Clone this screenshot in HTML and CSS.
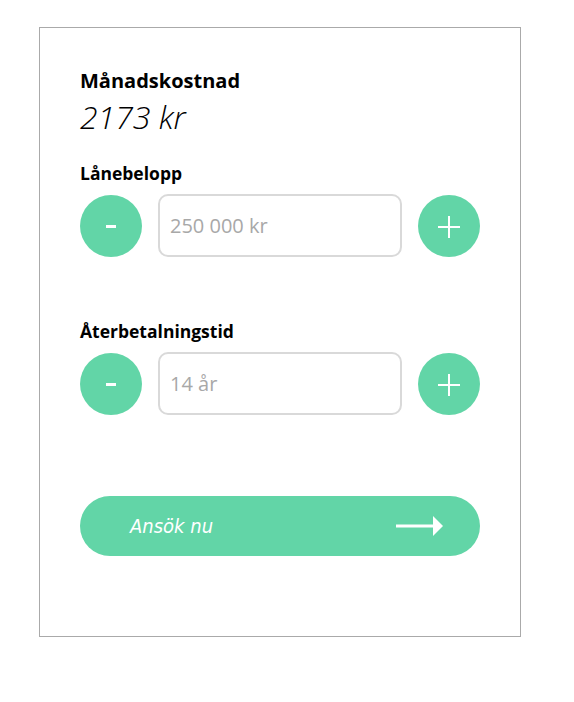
FILE: index.html
```html
<!DOCTYPE html>
<html lang="sv">
<head>
<meta charset="utf-8">
<title>Lånekalkylator</title>
<link rel="stylesheet" href="styles.css">
</head>
<body>
<div class="card">
  <div class="heading">Månadskostnad</div>
  <div class="value">2173 kr</div>

  <div class="label first">Lånebelopp</div>
  <div class="row">
    <button class="circle" aria-label="Minska"><span class="minus"></span></button>
    <div class="field">250 000 kr</div>
    <button class="circle" aria-label="Öka">
      <svg class="plus" width="22" height="22" viewBox="0 0 22 22"><path d="M11 0V22M0 11H22" stroke="#fff" stroke-width="2"/></svg>
    </button>
  </div>

  <div class="label second">Återbetalningstid</div>
  <div class="row">
    <button class="circle" aria-label="Minska"><span class="minus"></span></button>
    <div class="field">14 år</div>
    <button class="circle" aria-label="Öka">
      <svg class="plus" width="22" height="22" viewBox="0 0 22 22"><path d="M11 0V22M0 11H22" stroke="#fff" stroke-width="2"/></svg>
    </button>
  </div>

  <button class="apply">
    <span class="apply-text">Ansök nu</span>
    <svg class="arrow" width="47" height="20" viewBox="0 0 47 20"><path d="M0 10H38" stroke="#fff" stroke-width="3"/><path d="M37 0L47 10L37 20Z" fill="#fff"/></svg>
  </button>
</div>
</body>
</html>
```

FILE: styles.css
```css
html, body {
  margin: 0;
  padding: 0;
  background: #fff;
}

.card {
  box-sizing: border-box;
  width: 482px;
  margin: 27px 0 0 39px;
  padding: 41px 40px 80px;
  border: 1px solid #aaa;
  display: flex;
  flex-direction: column;
  font-family: "Open Sans", "Liberation Sans", sans-serif;
}

.heading, .label {
  font-weight: 700;
  line-height: 24px;
  color: #000;
}

.heading {
  font-size: 20px;
}

.label {
  font-size: 17.5px;
}

.value {
  margin-top: 4px;
  font-size: 32px;
  font-weight: 300;
  font-style: italic;
  line-height: 40px;
  color: #000;
}

.label.first {
  margin-top: 24px;
}

.label.second {
  margin-top: 62px;
}

.row {
  margin-top: 9px;
  display: flex;
  align-items: center;
  gap: 16px;
}

.circle {
  flex: 0 0 62px;
  width: 62px;
  height: 62px;
  border: 0;
  padding: 0;
  border-radius: 50%;
  background: #62d5a7;
  display: flex;
  align-items: center;
  justify-content: center;
}

.minus {
  display: block;
  width: 10px;
  height: 3px;
  margin-top: 2px;
  background: #fff;
}

.plus {
  display: block;
  margin-top: 2px;
}

.field {
  box-sizing: border-box;
  flex: 1 1 auto;
  height: 63px;
  border: 2px solid #d9d9d9;
  border-radius: 10px;
  padding: 0 10px;
  display: flex;
  align-items: center;
  font-size: 20px;
  color: #a8a8a8;
}

.apply {
  margin-top: 81px;
  height: 60px;
  border: 0;
  border-radius: 30px;
  background: #62d5a7;
  padding: 0 37px 0 50px;
  display: flex;
  align-items: center;
  justify-content: space-between;
}

.apply-text {
  font-family: "DejaVu Sans Condensed", "DejaVu Sans", sans-serif;
  font-style: italic;
  font-size: 20px;
  color: #fff;
}

.arrow {
  display: block;
}
```
